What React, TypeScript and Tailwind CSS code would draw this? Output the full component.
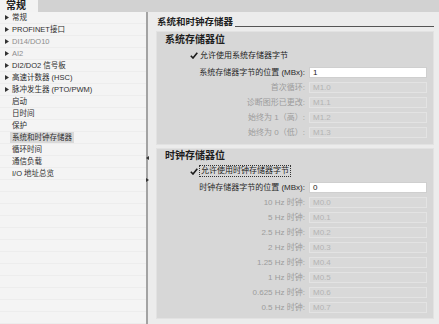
import React from 'react'

const FONT = '"Liberation Sans", "Noto Sans CJK SC", sans-serif'

interface TreeItem {
  label: string
  arrow?: boolean
  dim?: boolean
  active?: boolean
}

const treeItems: TreeItem[] = [
  { label: '常规', arrow: true },
  { label: 'PROFINET接口', arrow: true },
  { label: 'DI14/DO10', arrow: true, dim: true },
  { label: 'AI2', arrow: true, dim: true },
  { label: 'DI2/DO2 信号板', arrow: true },
  { label: '高速计数器 (HSC)', arrow: true },
  { label: '脉冲发生器 (PTO/PWM)', arrow: true },
  { label: '启动' },
  { label: '日时间' },
  { label: '保护' },
  { label: '系统和时钟存储器', active: true },
  { label: '循环时间' },
  { label: '通信负载' },
  { label: 'I/O 地址总览' },
]

const systemRows = [
  { label: '首次循环:', value: 'M1.0' },
  { label: '诊断图形已更改:', value: 'M1.1' },
  { label: '始终为 1（高）:', value: 'M1.2' },
  { label: '始终为 0（低）:', value: 'M1.3' },
]

const clockRows = ['10', '5', '2.5', '2', '1.25', '1', '0.625', '0.5'].map((hz, i) => ({
  label: `${hz} Hz 时钟:`,
  value: `M0.${i}`,
}))

const Check = () => (
  <svg width="8" height="7" viewBox="0 0 8 7" className="shrink-0">
    <path d="M0.8 3.8 L3 6 L7.3 0.8" fill="none" stroke="#1a1a1a" strokeWidth="1.6" />
  </svg>
)

const FieldRow = ({ label, value, enabled }: { label: string; value: string; enabled?: boolean }) => (
  <div className="flex items-center h-[15px]">
    <div className={`w-[148px] text-right text-[8px] leading-[11px] whitespace-nowrap ${enabled ? 'text-[#2a2a2a]' : 'text-[#9c9c9c]'}`}>
      {label}
    </div>
    <div
      className={`ml-[4px] w-[118px] h-[11px] pl-[3px] text-[8px] leading-[9px] border ${
        enabled ? 'bg-white border-[#cfcfcf] text-[#222]' : 'bg-[#d9d9d9] border-[#e3e3e3] text-[#b3b3b3]'
      }`}
    >
      {value}
    </div>
  </div>
)

const App = () => {
  const emptyRows = Array.from({ length: 12 })

  return (
    <div className="w-[439px] h-[324px] overflow-hidden flex flex-col bg-[#ececec]" style={{ fontFamily: FONT }}>
      {/* Tab bar */}
      <div className="h-[12px] flex bg-[#d2d2d2] shrink-0">
        <div className="w-[38px] bg-[#f3f3f3] pl-[6px] text-[10px] leading-[12px] font-bold text-[#1a1a1a]">常规</div>
      </div>

      <div className="flex flex-1 min-h-0">
        {/* Left navigation tree */}
        <div className="w-[146px] bg-[#f4f4f4] flex flex-col">
          {treeItems.map((item) => (
            <div key={item.label} className="h-[12px] flex items-center border-b border-[#ededed] shrink-0">
              <div className="w-[12px] flex justify-center pl-[1px]">
                {item.arrow && (
                  <svg width="4" height="5" viewBox="0 0 4 5">
                    <path d="M0 0 L4 2.5 L0 5 Z" fill="#333" />
                  </svg>
                )}
              </div>
              <span
                className={`text-[7.5px] leading-[11px] whitespace-nowrap ${item.dim ? 'text-[#8c8c8c]' : 'text-[#2e2e2e]'} ${
                  item.active ? 'bg-[#d9d9d9] -ml-[2px] px-[2px]' : ''
                }`}
              >
                {item.label}
              </span>
            </div>
          ))}
          {emptyRows.map((_, i) => (
            <div key={i} className="h-[12px] border-b border-[#ededed] shrink-0" />
          ))}
        </div>

        {/* Splitter */}
        <div className="w-[2px] bg-[#a3a3a3] relative">
          <svg width="3" height="4" viewBox="0 0 3 4" className="absolute left-0 top-[144px]">
            <path d="M3 0 L0 2 L3 4 Z" fill="#333" />
          </svg>
          <svg width="3" height="4" viewBox="0 0 3 4" className="absolute left-0 top-[166px]">
            <path d="M0 0 L3 2 L0 4 Z" fill="#333" />
          </svg>
        </div>

        {/* Right content */}
        <div className="flex-1 pl-[8px] pr-[5px] flex flex-col">
          <div className="mt-[4px] h-[12px] flex items-start">
            <span className="pl-[1px] text-[9.5px] leading-[12px] font-bold text-[#1e1e1e] whitespace-nowrap">系统和时钟存储器</span>
            <div className="flex-1 ml-[2px] h-[11px] border-b border-[#555]" />
          </div>

          {/* System memory bits */}
          <div className="mt-[3px] bg-[#d7d7d7] border border-[#e2e2e2] pt-[2px] pb-[4px]">
            <div className="h-[12px] pl-[8px] text-[10px] leading-[12px] font-bold text-[#1e1e1e]">系统存储器位</div>
            <div className="mt-[3px] h-[12px] flex items-center pl-[33px] gap-[1px]">
              <Check />
              <span className="text-[8px] leading-[11px] text-[#222] px-[1px]">允许使用系统存储器字节</span>
            </div>
            <div className="mt-[4px]">
              <FieldRow label="系统存储器字节的位置 (MBx):" value="1" enabled />
              {systemRows.map((r) => (
                <FieldRow key={r.value} label={r.label} value={r.value} />
              ))}
            </div>
          </div>

          {/* Clock memory bits */}
          <div className="mt-[3px] bg-[#d7d7d7] border border-[#e2e2e2] pt-[1px] pb-[3px]">
            <div className="h-[12px] pl-[8px] text-[10px] leading-[12px] font-bold text-[#1e1e1e]">时钟存储器位</div>
            <div className="mt-[3px] h-[12px] flex items-center pl-[33px] gap-[1px]">
              <Check />
              <span className="text-[8px] leading-[10px] text-[#222] px-[1px] border border-dotted border-[#333]">允许使用时钟存储器字节</span>
            </div>
            <div className="mt-[3px]">
              <FieldRow label="时钟存储器字节的位置 (MBx):" value="0" enabled />
              {clockRows.map((r) => (
                <FieldRow key={r.value} label={r.label} value={r.value} />
              ))}
            </div>
          </div>
        </div>
      </div>
    </div>
  )
}

export default App
